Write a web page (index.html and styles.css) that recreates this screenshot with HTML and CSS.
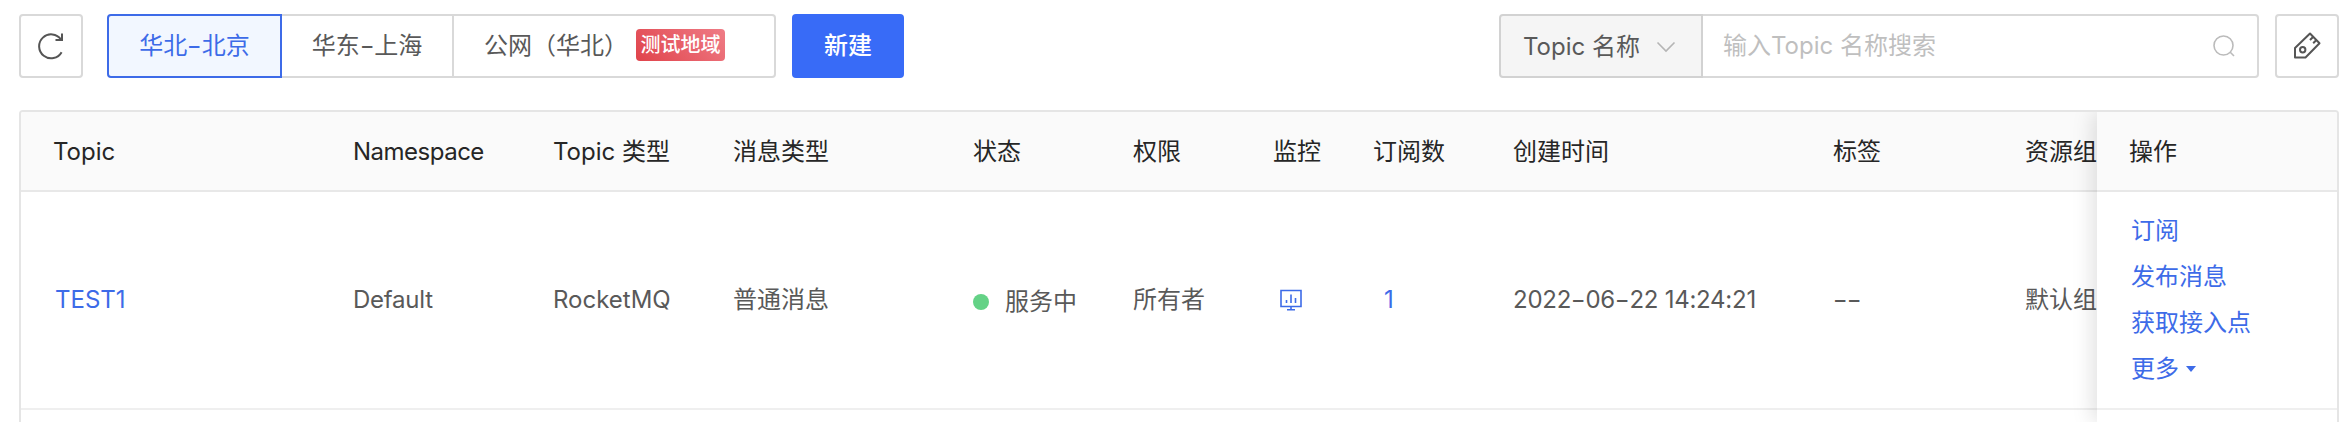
FILE: index.html
```html
<!DOCTYPE html>
<html lang="zh-CN">
<head>
<meta charset="utf-8">
<title>Topic 管理</title>
<link rel="stylesheet" href="styles.css">
</head>
<body>
<div class="toolbar">
  <button class="icon-btn" aria-label="刷新">
    <svg width="28" height="28" viewBox="0 0 28 28" fill="none" stroke="#555" stroke-width="2"><path d="M24.600 20.200A12 12 0 1 1 24 7.500"/><path d="M25 1.600V8H18.500"/></svg>
  </button>
  <div class="regions">
    <div class="region region-beijing active"><span>华北<span class="dash">-</span>北京</span></div>
    <div class="region region-shanghai"><span>华东<span class="dash">-</span>上海</span></div>
    <div class="region region-public"><span>公网（华北）</span><span class="badge">测试地域</span></div>
  </div>
  <button class="primary">新建</button>
  <div class="search">
    <div class="search-type"><span class="search-label">Topic 名称</span>
      <svg width="20" height="12" viewBox="0 0 20 12" fill="none" stroke="#b5b5b5" stroke-width="1.6"><path d="M1.5 1.5L10 10L18.500 1.500"/></svg>
    </div>
    <div class="search-input"><span>输入Topic 名称搜索</span>
      <svg width="24" height="24" viewBox="0 0 24 24" fill="none" stroke="#bbb" stroke-width="1.6"><circle cx="11.500" cy="11.500" r="9.500"/><path d="M18 18L22 22"/></svg>
    </div>
  </div>
  <button class="icon-btn tag-btn" aria-label="标签">
    <svg width="28" height="28" viewBox="0 0 28 28" fill="none" stroke="#555" stroke-width="2" stroke-linejoin="round"><path d="M2 16L17 1.500L26.500 11.300L12.500 25.500H2Z"/><circle cx="9.700" cy="17.800" r="2.700"/><path d="M20.300 4.700L17 8M23.400 8L20.200 11.200"/></svg>
  </button>
</div>

<div class="table">
  <div class="main">
    <div class="row head">
      <div class="c-topic">Topic</div><div class="c-ns tight">Namespace</div><div class="c-type">Topic 类型</div><div class="c-msg">消息类型</div><div class="c-status">状态</div><div class="c-perm">权限</div><div class="c-mon">监控</div><div class="c-sub">订阅数</div><div class="c-time">创建时间</div><div class="c-tag">标签</div><div class="c-group">资源组</div>
    </div>
    <div class="row data">
      <div class="c-topic"><a class="topic-link">TEST1</a></div><div class="c-ns default">Default</div><div class="c-type">RocketMQ</div><div class="c-msg">普通消息</div><div class="c-status"><span class="status"><i class="dot"></i>服务中</span></div><div class="c-perm">所有者</div><div class="c-mon"><svg class="monitor" width="24" height="22" viewBox="0 0 24 22" fill="none" stroke="#3d6be8" stroke-width="1.600"><path d="M2 1.500H22V17.500H2ZM12 17.500V20.500M8 20.700H16M7.500 11V14M12 5.500V14M16.500 9V14"/></svg></div><div class="c-sub"><a class="sub-link">1</a></div><div class="c-time date">2022<span class="dash">-</span>06<span class="dash">-</span>22 14:24:21</div><div class="c-tag"><span class="dash">-</span><span class="dash">-</span></div><div class="c-group">默认组</div>
    </div>
  </div>
  <div class="fixed">
    <div class="fixed-head">操作</div>
    <div class="actions"><a>订阅</a><a>发布消息</a><a>获取接入点</a><a>更多<svg class="caret" width="10" height="6" viewBox="0 0 10 6"><path d="M0 0H10L5 6Z" fill="#3d6be8"/></svg></a></div>
  </div>
</div>
</body>
</html>
```
FILE: styles.css
```css
* { box-sizing: border-box; }
body {
  margin: 0;
  height: 422px;
  overflow: hidden;
  background: #fff;
  color: #595959;
  font: 24px/36px Inter, "Noto Sans CJK SC", sans-serif;
  white-space: nowrap;
}
button { font: inherit; padding: 0; }
.toolbar { display: flex; padding: 14px 13px 0 19px; height: 78px; }
.icon-btn {
  width: 64px; height: 64px;
  display: flex; align-items: center; justify-content: center;
  background: #fff; border: 2px solid #d9d9d9; border-radius: 4px;
}
.regions { display: flex; margin-left: 24px; }
.region {
  display: flex; align-items: center; height: 64px;
  border: 2px solid #d9d9d9; border-left: 0;
}
.region-beijing { width: 175px; justify-content: center; border-radius: 4px 0 0 4px; }
.region-shanghai { width: 172px; justify-content: center; }
.region-public { width: 322px; padding-left: 30px; border-radius: 0 4px 4px 0; }
.region.active { color: #3d6be8; background: #f2f7ff; border: 2px solid #3d6be8; }
.badge {
  width: 89px; height: 32px; margin: -2px 0 0 8px; border-radius: 4px;
  background: linear-gradient(45deg, #e0434b, #ef7c86);
  color: #fff; font-size: 20px; line-height: 32px; text-align: center; font-weight: 500;
}
.primary {
  width: 112px; height: 64px; margin-left: 16px;
  background: #386bf7; color: #fff; border: 0; border-radius: 4px; font-weight: 500;
}
.search { display: flex; width: 760px; margin-left: auto; }
.search-type {
  display: flex; align-items: center; width: 204px; padding: 1px 0 0 22px;
  background: #f5f5f5; border: 2px solid #d2d2d2; border-radius: 4px 0 0 4px;
}
.search-label { width: 117px; margin-right: 16px; overflow: hidden; }
.search-input {
  display: flex; flex: 1; align-items: center; justify-content: space-between;
  padding: 0 21px 0 20px; color: #bfbfbf;
  border: 2px solid #d9d9d9; border-left: 0; border-radius: 0 4px 4px 0;
}
.tag-btn { margin-left: 16px; }

.table {
  display: flex; width: 2320px; height: 312px; margin: 32px 0 0 19px;
  border: 2px solid #e5e5e5; border-bottom: 0; border-radius: 4px 4px 0 0; overflow: hidden;
}
.main { width: 2076px; overflow: hidden; }
.row { display: flex; align-items: center; width: 2180px; }
.row > div { flex: none; padding-left: 32px; }
.head, .fixed-head {
  height: 80px; padding-top: 1px;
  color: #262626; background: #fafafa; border-bottom: 2px solid #e8e8e8;
}
.data, .actions { height: 218px; border-bottom: 2px solid #efefef; }
.c-topic { width: 300px; }
.c-ns { width: 200px; }
.c-type { width: 180px; }
.c-msg { width: 240px; }
.c-status { width: 160px; }
.c-perm { width: 140px; }
.c-mon { width: 100px; }
.c-sub { width: 140px; }
.c-time { width: 320px; }
.c-tag { width: 192px; }
.c-group { width: 208px; }
.tight { letter-spacing: -.5px; }
.default { letter-spacing: -.25px; }
.date { letter-spacing: -.25px; }
.dash {
  display: inline-block; width: 14.4px; text-align: center; letter-spacing: 0;
  transform: scaleX(1.35);
}
a { color: #3d6be8; }
.topic-link { margin-left: 2px; }
.sub-link { margin-left: 11px; }
.monitor { display: block; margin-left: 6px; }
.status { display: flex; align-items: center; padding-top: 3px; }
.dot { width: 16px; height: 16px; margin-right: 16px; border-radius: 50%; background: #64d286; }
.fixed {
  z-index: 1; width: 240px; background: #fff;
  box-shadow: -4px 0 20px rgba(0, 0, 0, .13);
}
.fixed-head { display: flex; align-items: center; padding-left: 32px; }
.actions { display: flex; flex-direction: column; padding: 16px 0 0 34px; line-height: 46px; }
.caret { margin-left: 7px; vertical-align: 5px; }
```
